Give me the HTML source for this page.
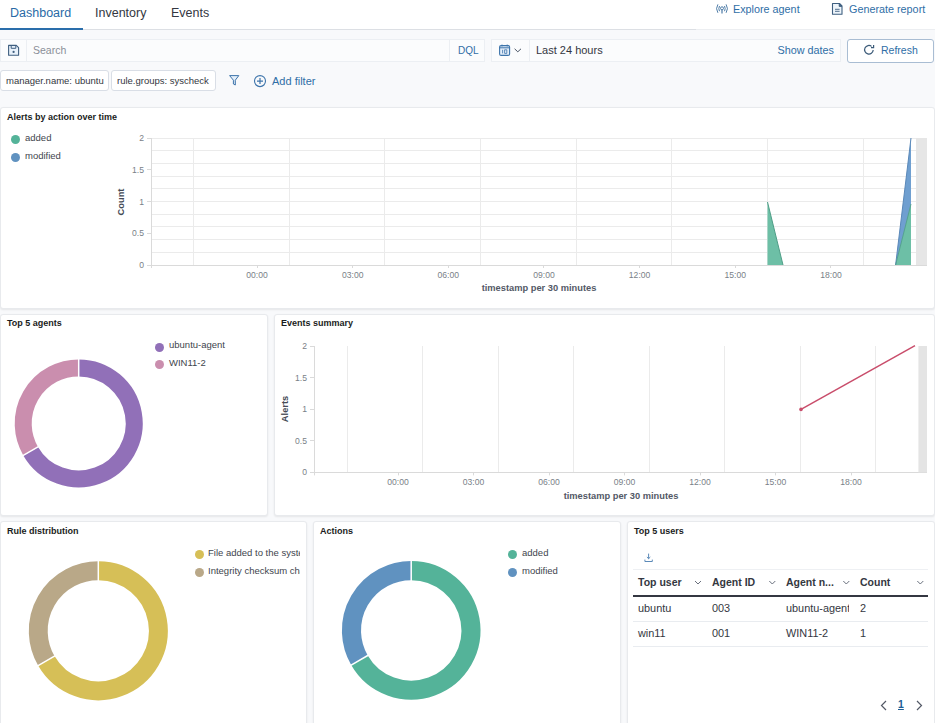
<!DOCTYPE html>
<html><head><meta charset="utf-8">
<style>
*{box-sizing:border-box;margin:0;padding:0}
html,body{width:935px;height:723px;overflow:hidden}
body{position:relative;background:#f8f9fb;font-family:"Liberation Sans",sans-serif;color:#343741}
.a{position:absolute;white-space:nowrap}
#hdr{left:0;top:0;width:935px;height:30px;background:#fff;border-bottom:1px solid #eceef1}
.tab{position:absolute;top:5px;font-size:12.5px;line-height:16px;color:#343741}
.link{color:#2f6ea6}
.panel{position:absolute;background:#fff;border:1px solid #e8eaed;border-radius:3px;box-shadow:0 1px 2px rgba(0,0,0,.08)}
.ptitle{position:absolute;left:6px;top:3px;font-size:9px;font-weight:bold;color:#1a1c21;line-height:12px}
.leg{position:absolute;font-size:9.5px;color:#41454d;line-height:12px}
.dot{position:absolute;width:9px;height:9px;border-radius:50%}
.box{position:absolute;background:#fbfcfd;border:1px solid #eceff3}
.pill{position:absolute;top:70px;height:21px;background:#fff;border:1px solid #d9dee6;border-radius:3px;font-size:9.5px;line-height:20px;color:#343741;padding-left:5px}
.th{font-size:10.5px;font-weight:bold;color:#343741;line-height:13px}
.td{font-size:10.9px;color:#343741;line-height:13px}
svg text{font-family:"Liberation Sans",sans-serif}
</style></head>
<body>
<div id="hdr" class="a"></div><div class="a" style="left:0;top:29px;width:696px;height:1px;background:#dcdfe4"></div>
<div class="tab" style="left:10px;color:#2a6aa6">Dashboard</div>
<div class="a" style="left:0;top:28px;width:83px;height:2px;background:#2a6eab"></div>
<div class="tab" style="left:95px">Inventory</div>
<div class="tab" style="left:171px">Events</div>
<div class="a link" style="left:733px;top:2px;font-size:10.8px;line-height:14px">Explore agent</div>
<div class="a link" style="left:849px;top:2px;font-size:10.8px;line-height:14px">Generate report</div>

<!-- search row -->
<div class="box" style="left:0;top:39px;width:27px;height:23px"></div>
<div class="box" style="left:26px;top:39px;width:424px;height:23px"></div>
<div class="a" style="left:33px;top:44px;font-size:10.5px;line-height:13px;color:#8a8f98">Search</div>
<div class="box" style="left:449px;top:39px;width:36px;height:23px"></div>
<div class="a link" style="left:458px;top:44px;font-size:10px;line-height:13px">DQL</div>
<div class="box" style="left:491px;top:39px;width:39px;height:23px"></div>
<div class="box" style="left:529px;top:39px;width:312px;height:23px"></div>
<div class="a" style="left:536px;top:43.5px;font-size:11px;line-height:13px;color:#343741">Last 24 hours</div>
<div class="a link" style="left:777.5px;top:43.5px;font-size:10.8px;line-height:13px">Show dates</div>
<div class="a" style="left:847px;top:38.5px;width:87px;height:24px;background:#fff;border:1px solid #a9bdd3;border-radius:3px"></div>
<div class="a link" style="left:881px;top:44px;font-size:10.5px;line-height:13px">Refresh</div>

<!-- filter row -->
<div class="pill" style="left:0;width:109px">manager.name: ubuntu</div>
<div class="pill" style="left:111px;width:105px">rule.groups: syscheck</div>
<div class="a link" style="left:272px;top:74.5px;font-size:11px;line-height:13px">Add filter</div>

<!-- panels -->
<div class="panel" style="left:0;top:106.5px;width:935px;height:202.5px"><div class="ptitle">Alerts by action over time</div></div>
<div class="panel" style="left:0;top:314px;width:268px;height:202px"><div class="ptitle" style="top:2px">Top 5 agents</div></div>
<div class="panel" style="left:274px;top:314px;width:661px;height:202px"><div class="ptitle" style="top:2px">Events summary</div></div>
<div class="panel" style="left:0;top:521px;width:307px;height:210px"><div class="ptitle">Rule distribution</div></div>
<div class="panel" style="left:313px;top:521px;width:308px;height:210px"><div class="ptitle">Actions</div></div>
<div class="panel" style="left:627px;top:521px;width:308px;height:210px"><div class="ptitle">Top 5 users</div></div>


<svg class="a" style="left:0;top:0" width="935" height="723" viewBox="0 0 935 723">
<line x1="151" x2="927" y1="138.5" y2="138.5" stroke="#ebebeb" stroke-width="1"/>
<line x1="151" x2="927" y1="150.5" y2="150.5" stroke="#ebebeb" stroke-width="1"/>
<line x1="151" x2="927" y1="163.5" y2="163.5" stroke="#ebebeb" stroke-width="1"/>
<line x1="151" x2="927" y1="176.5" y2="176.5" stroke="#ebebeb" stroke-width="1"/>
<line x1="151" x2="927" y1="188.5" y2="188.5" stroke="#ebebeb" stroke-width="1"/>
<line x1="151" x2="927" y1="201.5" y2="201.5" stroke="#ebebeb" stroke-width="1"/>
<line x1="151" x2="927" y1="214.5" y2="214.5" stroke="#ebebeb" stroke-width="1"/>
<line x1="151" x2="927" y1="226.5" y2="226.5" stroke="#ebebeb" stroke-width="1"/>
<line x1="151" x2="927" y1="239.5" y2="239.5" stroke="#ebebeb" stroke-width="1"/>
<line x1="151" x2="927" y1="252.5" y2="252.5" stroke="#ebebeb" stroke-width="1"/>
<line x1="151" x2="927" y1="265.5" y2="265.5" stroke="#ebebeb" stroke-width="1"/>
<line x1="193.5" x2="193.5" y1="138" y2="265" stroke="#ebebeb" stroke-width="1"/>
<line x1="289.5" x2="289.5" y1="138" y2="265" stroke="#ebebeb" stroke-width="1"/>
<line x1="384.5" x2="384.5" y1="138" y2="265" stroke="#ebebeb" stroke-width="1"/>
<line x1="480.5" x2="480.5" y1="138" y2="265" stroke="#ebebeb" stroke-width="1"/>
<line x1="576.5" x2="576.5" y1="138" y2="265" stroke="#ebebeb" stroke-width="1"/>
<line x1="671.5" x2="671.5" y1="138" y2="265" stroke="#ebebeb" stroke-width="1"/>
<line x1="767.5" x2="767.5" y1="138" y2="265" stroke="#ebebeb" stroke-width="1"/>
<line x1="863.5" x2="863.5" y1="138" y2="265" stroke="#ebebeb" stroke-width="1"/>
<line x1="151.5" x2="151.5" y1="138" y2="268" stroke="#dadada"/>
<line x1="151" x2="927" y1="265.5" y2="265.5" stroke="#dadada"/>
<line x1="147" x2="151" y1="265.5" y2="265.5" stroke="#dadada"/>
<text x="144" y="268.0" font-size="8.6" fill="#7a7f88" text-anchor="end">0</text>
<line x1="147" x2="151" y1="233.5" y2="233.5" stroke="#dadada"/>
<text x="144" y="236.2" font-size="8.6" fill="#7a7f88" text-anchor="end">0.5</text>
<line x1="147" x2="151" y1="201.5" y2="201.5" stroke="#dadada"/>
<text x="144" y="204.5" font-size="8.6" fill="#7a7f88" text-anchor="end">1</text>
<line x1="147" x2="151" y1="169.5" y2="169.5" stroke="#dadada"/>
<text x="144" y="172.8" font-size="8.6" fill="#7a7f88" text-anchor="end">1.5</text>
<line x1="147" x2="151" y1="138.5" y2="138.5" stroke="#dadada"/>
<text x="144" y="141.0" font-size="8.6" fill="#7a7f88" text-anchor="end">2</text>
<line x1="257.5" x2="257.5" y1="265" y2="268" stroke="#dadada"/>
<text x="257.0" y="278" font-size="8.6" fill="#7a7f88" text-anchor="middle">00:00</text>
<line x1="352.5" x2="352.5" y1="265" y2="268" stroke="#dadada"/>
<text x="352.7" y="278" font-size="8.6" fill="#7a7f88" text-anchor="middle">03:00</text>
<line x1="448.5" x2="448.5" y1="265" y2="268" stroke="#dadada"/>
<text x="448.3" y="278" font-size="8.6" fill="#7a7f88" text-anchor="middle">06:00</text>
<line x1="543.5" x2="543.5" y1="265" y2="268" stroke="#dadada"/>
<text x="544.0" y="278" font-size="8.6" fill="#7a7f88" text-anchor="middle">09:00</text>
<line x1="639.5" x2="639.5" y1="265" y2="268" stroke="#dadada"/>
<text x="639.6" y="278" font-size="8.6" fill="#7a7f88" text-anchor="middle">12:00</text>
<line x1="735.5" x2="735.5" y1="265" y2="268" stroke="#dadada"/>
<text x="735.3" y="278" font-size="8.6" fill="#7a7f88" text-anchor="middle">15:00</text>
<line x1="830.5" x2="830.5" y1="265" y2="268" stroke="#dadada"/>
<text x="831.0" y="278" font-size="8.6" fill="#7a7f88" text-anchor="middle">18:00</text>
<text x="539" y="291" font-size="9.3" font-weight="bold" fill="#535966" text-anchor="middle">timestamp per 30 minutes</text>
<text transform="translate(124,202) rotate(-90)" font-size="9.3" font-weight="bold" fill="#454a55" text-anchor="middle">Count</text>
<rect x="916" y="138" width="11" height="127" fill="#e6e6e6"/>
<polygon points="767.5,202 767.5,265 783,265" fill="#6dbfa6"/>
<polyline points="767.5,202 783,265" fill="none" stroke="#4f9e87" stroke-width="1"/>
<polygon points="895.6,265 911,138 911,265" fill="#6f9fd0"/>
<polygon points="895.6,265 911,204 911,265" fill="#6dbfa6"/>
<polyline points="895.6,265 911,138" fill="none" stroke="#5a88b8" stroke-width="1"/>
<polyline points="895.6,265 911,204" fill="none" stroke="#4f9e87" stroke-width="0.8"/>
<line x1="347.5" x2="347.5" y1="346" y2="472.4" stroke="#ebebeb" stroke-width="1"/>
<line x1="422.5" x2="422.5" y1="346" y2="472.4" stroke="#ebebeb" stroke-width="1"/>
<line x1="498.5" x2="498.5" y1="346" y2="472.4" stroke="#ebebeb" stroke-width="1"/>
<line x1="573.5" x2="573.5" y1="346" y2="472.4" stroke="#ebebeb" stroke-width="1"/>
<line x1="649.5" x2="649.5" y1="346" y2="472.4" stroke="#ebebeb" stroke-width="1"/>
<line x1="724.5" x2="724.5" y1="346" y2="472.4" stroke="#ebebeb" stroke-width="1"/>
<line x1="800.5" x2="800.5" y1="346" y2="472.4" stroke="#ebebeb" stroke-width="1"/>
<line x1="875.5" x2="875.5" y1="346" y2="472.4" stroke="#ebebeb" stroke-width="1"/>
<line x1="314.5" x2="314.5" y1="346" y2="475.4" stroke="#dadada"/>
<line x1="314" x2="927" y1="472.5" y2="472.5" stroke="#dadada"/>
<line x1="310" x2="314" y1="472.5" y2="472.5" stroke="#dadada"/>
<text x="307" y="475.4" font-size="8.6" fill="#7a7f88" text-anchor="end">0</text>
<line x1="310" x2="314" y1="440.5" y2="440.5" stroke="#dadada"/>
<text x="307" y="443.8" font-size="8.6" fill="#7a7f88" text-anchor="end">0.5</text>
<line x1="310" x2="314" y1="409.5" y2="409.5" stroke="#dadada"/>
<text x="307" y="412.2" font-size="8.6" fill="#7a7f88" text-anchor="end">1</text>
<line x1="310" x2="314" y1="377.5" y2="377.5" stroke="#dadada"/>
<text x="307" y="380.6" font-size="8.6" fill="#7a7f88" text-anchor="end">1.5</text>
<line x1="310" x2="314" y1="346.5" y2="346.5" stroke="#dadada"/>
<text x="307" y="349.0" font-size="8.6" fill="#7a7f88" text-anchor="end">2</text>
<line x1="398.5" x2="398.5" y1="472.4" y2="475.4" stroke="#dadada"/>
<text x="398.0" y="485" font-size="8.6" fill="#7a7f88" text-anchor="middle">00:00</text>
<line x1="473.5" x2="473.5" y1="472.4" y2="475.4" stroke="#dadada"/>
<text x="473.5" y="485" font-size="8.6" fill="#7a7f88" text-anchor="middle">03:00</text>
<line x1="549.5" x2="549.5" y1="472.4" y2="475.4" stroke="#dadada"/>
<text x="549.0" y="485" font-size="8.6" fill="#7a7f88" text-anchor="middle">06:00</text>
<line x1="624.5" x2="624.5" y1="472.4" y2="475.4" stroke="#dadada"/>
<text x="624.5" y="485" font-size="8.6" fill="#7a7f88" text-anchor="middle">09:00</text>
<line x1="700.5" x2="700.5" y1="472.4" y2="475.4" stroke="#dadada"/>
<text x="700.0" y="485" font-size="8.6" fill="#7a7f88" text-anchor="middle">12:00</text>
<line x1="775.5" x2="775.5" y1="472.4" y2="475.4" stroke="#dadada"/>
<text x="775.5" y="485" font-size="8.6" fill="#7a7f88" text-anchor="middle">15:00</text>
<line x1="851.5" x2="851.5" y1="472.4" y2="475.4" stroke="#dadada"/>
<text x="851.0" y="485" font-size="8.6" fill="#7a7f88" text-anchor="middle">18:00</text>
<text x="621" y="499" font-size="9.3" font-weight="bold" fill="#535966" text-anchor="middle">timestamp per 30 minutes</text>
<text transform="translate(288,409) rotate(-90)" font-size="9.3" font-weight="bold" fill="#454a55" text-anchor="middle">Alerts</text>
<rect x="918.4" y="346" width="8.6" height="126.4" fill="#e4e4e4"/>
<line x1="801" y1="409.4" x2="915" y2="345.6" stroke="#c94d6b" stroke-width="1.5"/>
<circle cx="801" cy="409.4" r="1.8" fill="#c94d6b"/>
<path d="M78.70,367.90 A55.50,55.50 0 1 1 30.64,451.15" fill="none" stroke="#9170b8" stroke-width="17"/>
<path d="M30.64,451.15 A55.50,55.50 0 0 1 78.70,367.90" fill="none" stroke="#ca8eae" stroke-width="17"/>
<path d="M78.70,377.40 L78.70,358.40" stroke="#fff" stroke-width="1.5"/>
<path d="M38.86,446.40 L22.41,455.90" stroke="#fff" stroke-width="1.5"/>
<path d="M98.30,570.75 A60.05,60.05 0 1 1 46.30,660.82" fill="none" stroke="#d6bf57" stroke-width="18.9"/>
<path d="M46.30,660.82 A60.05,60.05 0 0 1 98.30,570.75" fill="none" stroke="#b9a888" stroke-width="18.9"/>
<path d="M98.30,581.20 L98.30,560.30" stroke="#fff" stroke-width="1.5"/>
<path d="M55.35,655.60 L37.25,666.05" stroke="#fff" stroke-width="1.5"/>
<path d="M411.20,570.65 A59.75,59.75 0 1 1 359.45,660.27" fill="none" stroke="#54b399" stroke-width="19.099999999999994"/>
<path d="M359.45,660.27 A59.75,59.75 0 0 1 411.20,570.65" fill="none" stroke="#6092c0" stroke-width="19.099999999999994"/>
<path d="M411.20,581.20 L411.20,560.10" stroke="#fff" stroke-width="1.5"/>
<path d="M368.59,655.00 L350.32,665.55" stroke="#fff" stroke-width="1.5"/>
<path d="M8.6,45.4 H16.3 L18.6,47.7 V55.3 H8.6 Z" fill="#e8f1fa" stroke="#3f5f80" stroke-width="1.1" stroke-linejoin="round"/>
<path d="M11.2,45.4 V48.3 H15.8 V45.4" fill="none" stroke="#3f5f80" stroke-width="1"/>
<circle cx="13.6" cy="51.9" r="1.1" fill="#3f5f80"/>
<rect x="499.6" y="45.6" width="10" height="9.8" rx="1.5" fill="#e3eef9" stroke="#3d74ab" stroke-width="1.1"/>
<line x1="499.6" y1="47.8" x2="509.6" y2="47.8" stroke="#3d74ab" stroke-width="1"/>
<line x1="502" y1="44.6" x2="502" y2="46.4" stroke="#3d74ab" stroke-width="1"/>
<line x1="507.2" y1="44.6" x2="507.2" y2="46.4" stroke="#3d74ab" stroke-width="1"/>
<path d="M502.6,49.8 V53.4 M504.6,49.8 H506.8 V53.4 H504.6 Z" fill="none" stroke="#3d74ab" stroke-width="0.8"/>
<path d="M514.6,48.8 L517.8,51.8 L521,48.8" fill="none" stroke="#4a5566" stroke-width="1"/>
<path d="M873.2,50 A4.3,4.3 0 1 1 871.6,46.4" fill="none" stroke="#3b5a78" stroke-width="1.2"/>
<path d="M873.6,45 V47.6 H871" fill="none" stroke="#3b5a78" stroke-width="1.2"/>
<path d="M717.9,4.4 Q715.2,8.6 717.9,12.8 M719.5,6 Q718.1,8.6 719.5,11.2 M726.1,4.4 Q728.8,8.6 726.1,12.8 M724.5,6 Q725.9,8.6 724.5,11.2" fill="none" stroke="#3b6e9e" stroke-width="0.9"/>
<circle cx="722" cy="8.3" r="1.5" fill="none" stroke="#3b6e9e" stroke-width="0.9"/>
<line x1="722" y1="10" x2="722" y2="13.6" stroke="#3b6e9e" stroke-width="1.1"/>
<path d="M832.5,3.5 H839.5 L842,6 V14.3 H832.5 Z" fill="#eef5fb" stroke="#3f5f80" stroke-width="1.1" stroke-linejoin="round"/>
<path d="M839.2,3.6 V6.4 H842" fill="#3f5f80" stroke="#3f5f80" stroke-width="0.9"/>
<line x1="835" y1="9.3" x2="839.6" y2="9.3" stroke="#3f5f80" stroke-width="0.9"/>
<line x1="835" y1="11.3" x2="839.6" y2="11.3" stroke="#3f5f80" stroke-width="0.9"/>
<path d="M229.6,75.6 H238.8 L235.3,80.2 V85 L233.4,84 V80.2 Z" fill="#e3eef9" stroke="#3d74ab" stroke-width="1" stroke-linejoin="round"/>
<circle cx="260" cy="81.1" r="5.5" fill="none" stroke="#3d74ab" stroke-width="1.1"/>
<path d="M257,81.1 H263 M260,78.1 V84.1" stroke="#3d74ab" stroke-width="1.2"/>
<path d="M648.6,553.6 V558.6 M646.9,557 L648.6,558.7 L650.3,557 M644.9,559.6 V561.5 H652.3 V559.6" fill="none" stroke="#4a7db0" stroke-width="0.9"/>
<path d="M695,581 L698,584 L701,581" fill="none" stroke="#69707d" stroke-width="1"/>
<path d="M769.3,581 L772.3,584 L775.3,581" fill="none" stroke="#69707d" stroke-width="1"/>
<path d="M843.3,581 L846.3,584 L849.3,581" fill="none" stroke="#69707d" stroke-width="1"/>
<path d="M917.3,581 L920.3,584 L923.3,581" fill="none" stroke="#69707d" stroke-width="1"/>
<path d="M886,701 L881.5,705.5 L886,710" fill="none" stroke="#535966" stroke-width="1.2"/>
<path d="M917,701 L921.5,705.5 L917,710" fill="none" stroke="#535966" stroke-width="1.2"/>
</svg>

<!-- legends -->
<div class="dot" style="left:11px;top:135px;background:#54b399"></div><div class="leg" style="left:25px;top:132px">added</div>
<div class="dot" style="left:11px;top:153px;background:#6092c0"></div><div class="leg" style="left:25px;top:150px">modified</div>
<div class="dot" style="left:155px;top:342.5px;background:#9170b8"></div><div class="leg" style="left:169px;top:339px">ubuntu-agent</div>
<div class="dot" style="left:155px;top:360px;background:#ca8eae"></div><div class="leg" style="left:169px;top:357px">WIN11-2</div>
<div class="a" style="left:190px;top:540px;width:110px;height:40px;overflow:hidden">
<div class="dot" style="left:5px;top:10px;background:#d6bf57"></div><div class="leg" style="left:18px;top:7px">File added to the system</div>
<div class="dot" style="left:5px;top:28px;background:#b9a888"></div><div class="leg" style="left:18px;top:25px">Integrity checksum changed</div>
</div>
<div class="dot" style="left:508px;top:550px;background:#54b399"></div><div class="leg" style="left:522px;top:547px">added</div>
<div class="dot" style="left:508px;top:568px;background:#6092c0"></div><div class="leg" style="left:522px;top:565px">modified</div>

<!-- table -->
<div class="a" style="left:633px;top:569px;width:295px;height:1px;background:#eef0f3"></div>
<div class="a th" style="left:638px;top:576px">Top user</div>
<div class="a th" style="left:712px;top:576px">Agent ID</div>
<div class="a th" style="left:786px;top:576px">Agent n...</div>
<div class="a th" style="left:860px;top:576px">Count</div>
<div class="a" style="left:633px;top:595px;width:295px;height:2px;background:#343741"></div>
<div class="a td" style="left:638px;top:602px">ubuntu</div>
<div class="a td" style="left:712px;top:602px">003</div>
<div class="a td" style="left:786px;top:602px;width:63px;overflow:hidden">ubuntu-agent</div>
<div class="a td" style="left:860px;top:602px">2</div>
<div class="a" style="left:633px;top:621px;width:295px;height:1px;background:#e9ecf0"></div>
<div class="a td" style="left:638px;top:627px">win11</div>
<div class="a td" style="left:712px;top:627px">001</div>
<div class="a td" style="left:786px;top:627px">WIN11-2</div>
<div class="a td" style="left:860px;top:627px">1</div>
<div class="a" style="left:633px;top:646px;width:295px;height:1px;background:#e9ecf0"></div>
<div class="a" style="left:898px;top:698px;font-size:10.5px;font-weight:bold;color:#1d5e96;text-decoration:underline">1</div>
</body></html>
